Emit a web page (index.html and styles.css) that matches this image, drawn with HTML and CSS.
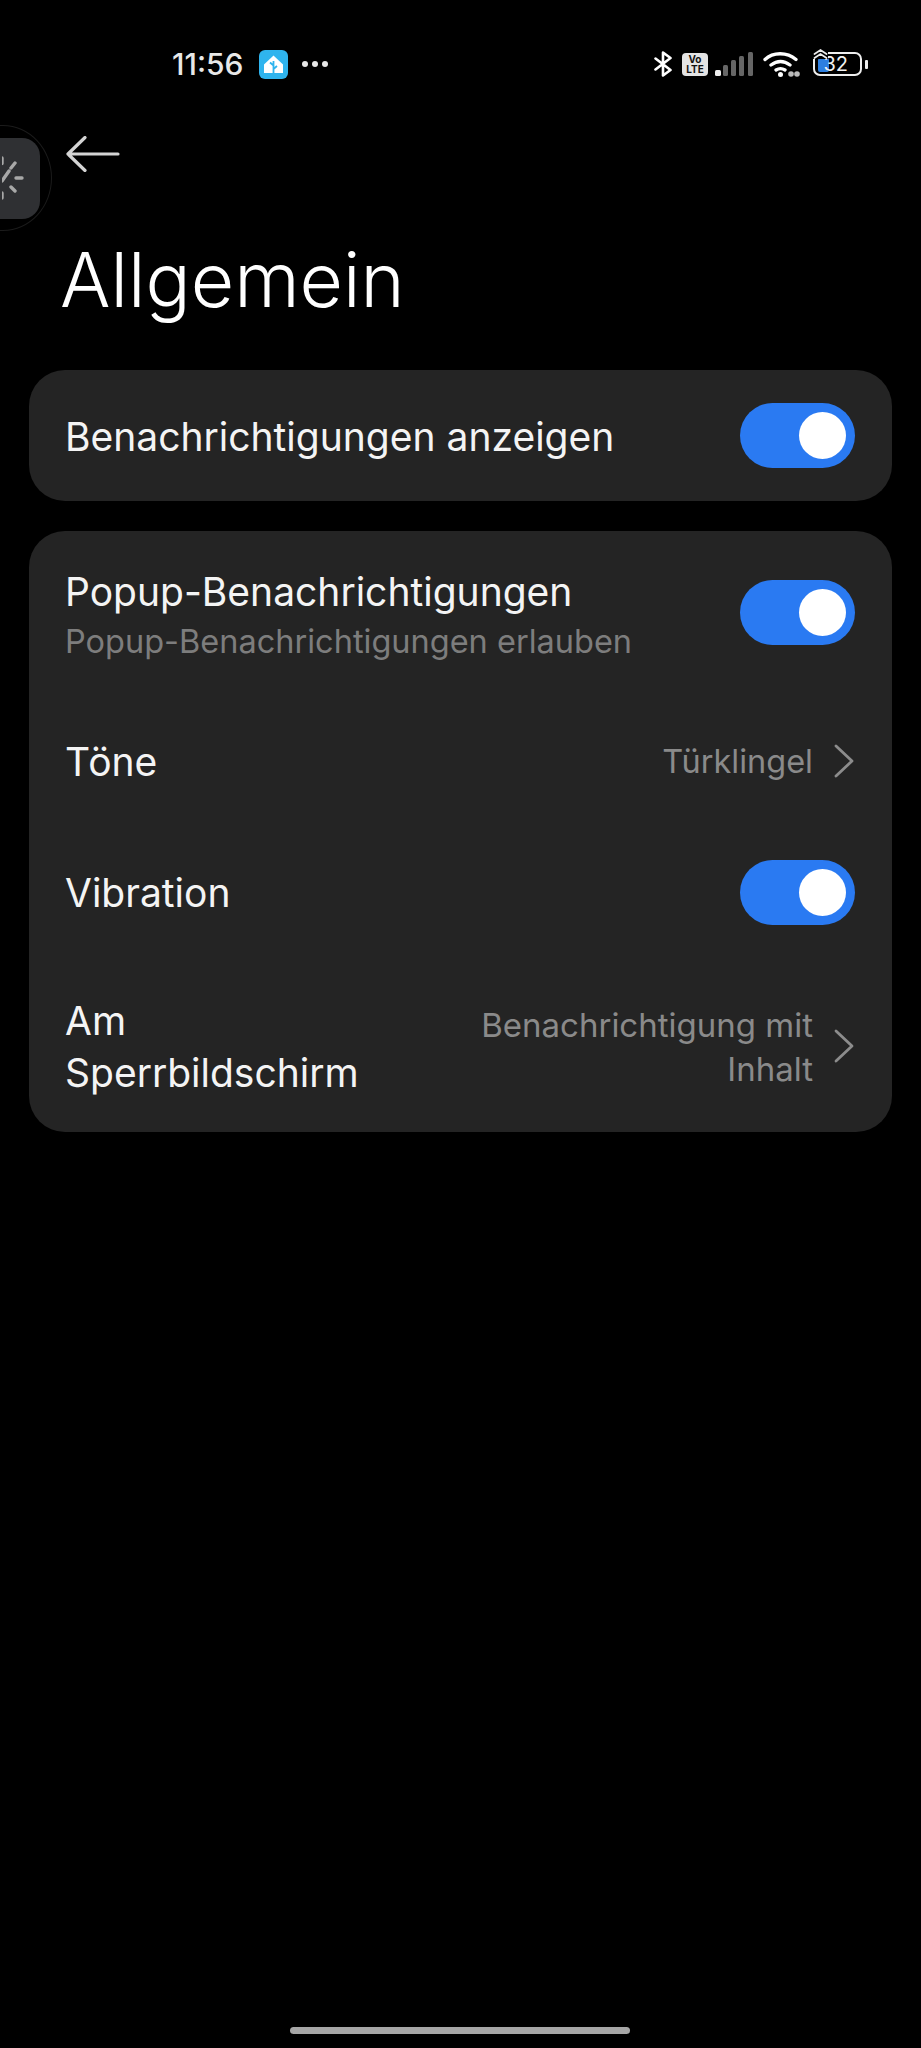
FILE: index.html
```html
<!DOCTYPE html>
<html lang="de">
<head>
<meta charset="utf-8">
<title>Allgemein</title>
<link rel="stylesheet" href="styles.css">
</head>
<body>
<div class="phone">
  <div class="status">
    <div class="status-left">
      <span class="time">11:56</span>
      <svg class="ha" width="29" height="29" viewBox="0 0 29 29"><rect width="29" height="29" rx="6" fill="#2fb4ee"/><path d="M14.500 5.500 L24 14.500 V23 H5 V14.500 Z" fill="#fff"/><path d="M14.500 23.500V11M14.500 15.500l-3.500-3M14.500 19l3.500-3" stroke="#2fb4ee" stroke-width="1.800" fill="none"/></svg>
      <span class="dots"><i></i><i></i><i></i></span>
    </div>
    <div class="status-right">
      <svg class="bt" width="20" height="26" viewBox="0 0 20 26"><path d="M2.500 7.500l15 11.500-7.500 5.500V1.500l7.500 5.500-15 11.500" fill="none" stroke="#fff" stroke-width="2.600" stroke-linejoin="round" stroke-linecap="round"/></svg>
      <span class="volte">Vo<br>LTE</span>
      <svg class="signal" width="38" height="24" viewBox="0 0 38 24"><rect x="0" y="18" width="6" height="6" rx="1.500" fill="#eee"/><rect x="8" y="13" width="5" height="11" rx="1.500" fill="#666"/><rect x="16" y="8" width="5" height="16" rx="1.500" fill="#666"/><rect x="24" y="4" width="5" height="20" rx="1.500" fill="#666"/><rect x="33" y="0" width="5" height="24" rx="1.500" fill="#666"/></svg>
      <svg class="wifi" width="37" height="26" viewBox="0 0 37 26"><path d="M2 8.500C10 .8 24 .8 33 8.500M8 14c6-4.500 13-4.500 19 0M13 19c3-1.800 6-1.800 9 0" fill="none" stroke="#fff" stroke-width="3.300" stroke-linecap="round"/><circle cx="17.500" cy="23.500" r="2.500" fill="#fff"/><circle cx="28" cy="23" r="2.800" fill="#bbb"/><circle cx="34" cy="23" r="2.800" fill="#bbb"/></svg>
      <span class="battery-wrap">
        <span class="battery"><span class="charge"></span><span class="level">32</span></span>
        <svg class="up" width="15" height="10" viewBox="0 0 15 10"><path d="M1.500 5L7.500 1l6 4M1.500 9l6-4 6 4" fill="none" stroke="#eee" stroke-width="1.700" stroke-linecap="round"/></svg>
      </span>
      <span class="nub"></span>
    </div>
  </div>

  <div class="bubble"><div class="bubble-inner">
    <svg width="36" height="60" viewBox="0 0 36 60"><g stroke="#a8a8a8" stroke-width="3.400" stroke-linecap="round"><path d="M0 10V15.500M0 45V50M14 30H20M9 20l4-5M9 39l4 4M0 33l7-10"/></g></svg>
  </div></div>

  <div class="back">
    <svg width="54" height="36" viewBox="0 0 54 36"><path d="M52 18H2M19 1.500L2 18l17 16.500" fill="none" stroke="#d4d4d4" stroke-width="3.200" stroke-linecap="round" stroke-linejoin="round"/></svg>
  </div>

  <h1 class="title">Allgemein</h1>

  <section class="card card-one">
    <div class="row row-single">
      <span class="label">Benachrichtigungen anzeigen</span>
      <span class="toggle"></span>
    </div>
  </section>

  <section class="card">
    <div class="row row-popup">
      <div class="popup-text">
        <div class="label">Popup-Benachrichtigungen</div>
        <div class="sub">Popup-Benachrichtigungen erlauben</div>
      </div>
      <span class="toggle"></span>
    </div>
    <div class="row row-tone">
      <span class="label">Töne</span>
      <span class="value-wrap"><span class="value">Türklingel</span><svg class="chev" width="22" height="34" viewBox="0 0 22 34"><path d="M3 2l16 15L3 32" fill="none" stroke="#8c8c8c" stroke-width="2.800" stroke-linecap="round" stroke-linejoin="round"/></svg></span>
    </div>
    <div class="row row-vib">
      <span class="label">Vibration</span>
      <span class="toggle"></span>
    </div>
    <div class="row row-lock">
      <span class="label lock-label">Am Sperrbildschirm</span>
      <span class="value-wrap"><span class="value lock-value">Benachrichtigung mit Inhalt</span><svg class="chev" width="22" height="34" viewBox="0 0 22 34"><path d="M3 2l16 15L3 32" fill="none" stroke="#8c8c8c" stroke-width="2.800" stroke-linecap="round" stroke-linejoin="round"/></svg></span>
    </div>
  </section>

  <div class="home-bar"></div>
</div>
</body>
</html>
```

FILE: styles.css
```css
* { box-sizing: border-box; }
html, body { margin: 0; padding: 0; background: #000; }
body { font-family: Inter, "Noto Sans", sans-serif; color: #f2f2f2; }
.phone { position: relative; width: 921px; height: 2048px; background: #000; overflow: hidden; display: flex; flex-direction: column; }

.status { height: 64px; margin-top: 32px; display: flex; justify-content: space-between; align-items: center; padding: 0 53px 0 172px; flex: none; }
.status-left { display: flex; align-items: center; }
.time { font-size: 30px; font-weight: 500; color: #e8e8e8; width: 87px; }
.dots { display: flex; gap: 4px; margin-left: 14px; }
.dots i { width: 6px; height: 6px; border-radius: 50%; background: #e8e8e8; }
.status-right { display: flex; align-items: center; }
.volte { width: 26px; height: 23px; margin-left: 9px; background: #e4e4e4; color: #111; border-radius: 4px; font-size: 10px; line-height: 10px; font-weight: 700; text-align: center; padding-top: 1px; }
.signal { margin-left: 7px; }
.wifi { margin-left: 10px; }
.battery-wrap { position: relative; display: block; margin-left: 13px; }
.battery { position: relative; width: 49px; height: 24px; border: 2px solid #eee; border-radius: 7px; overflow: hidden; display: flex; align-items: center; justify-content: flex-end; padding-right: 12px; }
.charge { position: absolute; left: 3px; top: 4px; width: 11px; height: 14px; background: #2e7fe0; border-radius: 2px; }
.level { position: relative; font-size: 20px; line-height: 20px; color: #f2f2f2; }
.up { position: absolute; left: 0; top: -3px; background: #000; }
.nub { width: 3px; height: 9px; background: #eee; border-radius: 1px; margin-left: 3px; }

.bubble { position: absolute; left: -46px; top: 125px; width: 98px; height: 106px; border: 1px solid #1b1b1b; border-radius: 50%; display: flex; align-items: center; justify-content: center; }
.bubble-inner { width: 74px; height: 81px; border-radius: 18px; background: #2f3033; display: flex; align-items: center; justify-content: flex-end; flex: none; overflow: hidden; }
.bubble-inner svg { flex: none; margin-right: 2px; }

.back { height: 36px; margin: 40px 0 0 66px; flex: none; display: flex; }
.title { margin: 62px 0 0 60px; font-size: 75px; line-height: 92px; font-weight: 300; color: #fff; flex: none; }

.card { margin: 0 29px; background: #242424; border-radius: 36px; flex: none; }
.card-one { margin-top: 44px; margin-bottom: 30px; }
.row { display: flex; align-items: center; justify-content: space-between; padding: 0 37px 0 36px; }
.row-single { height: 131px; }
.row-popup { height: 162px; }
.popup-text { padding-top: 3px; }
.row-tone { height: 135px; }
.row-vib { height: 128px; }
.row-lock { height: 176px; padding-top: 3px; }

.label { font-size: 39px; line-height: 52px; color: #f4f4f4; padding-top: 2px; }
.lock-label { width: 320px; }
.sub { font-size: 32.500px; line-height: 44px; color: #7d7d7d; margin-top: 2px; }
.value-wrap { display: flex; align-items: center; gap: 20px; }
.value { font-size: 32.500px; line-height: 44px; color: #8a8a8a; padding-top: 2px; }
.lock-value { width: 340px; text-align: right; font-size: 33px; }
.chev { flex: none; }

.toggle { position: relative; display: block; width: 115px; height: 65px; border-radius: 33px; background: #2a7af2; flex: none; }
.toggle::after { content: ""; position: absolute; right: 9px; top: 9px; width: 47px; height: 47px; border-radius: 50%; background: #fff; }

.home-bar { position: absolute; left: 290px; top: 2027px; width: 340px; height: 7px; border-radius: 4px; background: #a6a6a6; }
```
